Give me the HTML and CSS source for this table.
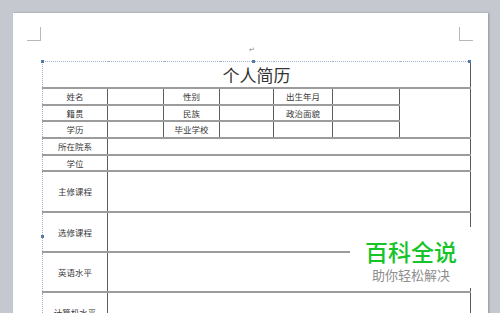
FILE: index.html
```html
<!DOCTYPE html>
<html lang="zh">
<head>
<meta charset="utf-8">
<title>个人简历</title>
<link rel="stylesheet" href="styles.css">
</head>
<body>
<div class="page">
  <div class="corners">
    <span class="corner corner-tl"></span>
    <span class="corner corner-tr"></span>
  </div>
  <div class="para"><span class="mark">↵</span></div>
  <div class="tablewrap">
    <span class="handle handle-tl"></span>
    <span class="handle handle-tc"></span>
    <span class="handle handle-tr"></span>
    <span class="handle handle-ml"></span>
    <table class="resume">
      <colgroup>
        <col class="c1"><col class="c2"><col class="c3"><col class="c4"><col class="c5"><col class="c6"><col class="c7">
      </colgroup>
      <tr class="r-title"><td class="title" colspan="7">个人简历</td></tr>
      <tr class="r-s1"><td class="first">姓名</td><td></td><td>性别</td><td></td><td>出生年月</td><td></td><td class="last" rowspan="3"></td></tr>
      <tr class="r-s2"><td class="first">籍贯</td><td></td><td>民族</td><td></td><td>政治面貌</td><td></td></tr>
      <tr class="r-s3"><td class="first">学历</td><td></td><td>毕业学校</td><td></td><td></td><td></td></tr>
      <tr class="r-s4"><td class="first">所在院系</td><td class="last" colspan="6"></td></tr>
      <tr class="r-s5"><td class="first">学位</td><td class="last" colspan="6"></td></tr>
      <tr class="r-big"><td class="first">主修课程</td><td class="last" colspan="6"></td></tr>
      <tr class="r-big2"><td class="first">选修课程</td><td class="last" colspan="6"></td></tr>
      <tr class="r-big2"><td class="first">英语水平</td><td class="last" colspan="6"></td></tr>
      <tr class="r-big2"><td class="first">计算机水平</td><td class="last" colspan="6"></td></tr>
    </table>
  </div>
  <div class="watermark">
    <div class="wm-main">百科全说</div>
    <div class="wm-sub">助你轻松解决</div>
  </div>
</div>
</body>
</html>
```
FILE: styles.css
```css
html, body {
  margin: 0;
  padding: 0;
}
body {
  background: #c5c9cf;
  width: 500px;
  height: 313px;
  overflow: hidden;
  font-family: "Noto Sans CJK SC", "Noto Sans", sans-serif;
}
.page {
  position: relative;
  margin: 13px 0 0 13px;
  width: 475px;
  height: 320px;
  background: #ffffff;
  box-shadow: 1px 0 2px rgba(80, 85, 95, 0.45);
  padding: 14px 15px 0 14px;
  box-sizing: border-box;
}
.corners {
  display: flex;
  justify-content: space-between;
  height: 14px;
}
.corner {
  width: 14px;
  height: 14px;
  box-sizing: border-box;
  border-bottom: 1px solid #b8b8b8;
}
.corner-tl { border-right: 1px solid #b8b8b8; }
.corner-tr { border-left: 1px solid #b8b8b8; }
.para {
  height: 20px;
  display: flex;
  justify-content: center;
  align-items: flex-start;
  padding-left: 4px;
}
.mark {
  font-size: 7px;
  line-height: 7px;
  margin-top: 5px;
  color: #8a8a8a;
}
.tablewrap {
  position: relative;
  margin-left: 15px;
  width: 428px;
}
.resume {
  border-collapse: collapse;
  table-layout: fixed;
  width: 428px;
}
.c1 { width: 65px; }
.c2 { width: 56px; }
.c3 { width: 56px; }
.c4 { width: 54px; }
.c5 { width: 59px; }
.c6 { width: 67px; }
.c7 { width: 71px; }
.resume td {
  padding: 0;
  border-left: 1px solid #5c5c5c;
  border-right: 1px solid #5c5c5c;
  border-bottom: 2px solid #9c9c9c;
  text-align: center;
  vertical-align: middle;
  font-size: 8.5px;
  line-height: 10px;
  color: #3a3a3a;
}
.resume td.first {
  border-left: 1px dotted #9fb2cc;
}
.resume td.last {
  border-right: 1px solid #5c5c5c;
}
.resume td.title {
  border-top: 1px dotted #9fb2cc;
  border-left: 1px dotted #9fb2cc;
  border-right: 1px solid #5c5c5c;
  font-size: 17px;
  line-height: 20px;
  color: #333;
  padding-top: 1px;
}
.r-title { height: 26px; }
.r-s1 { height: 17px; }
.r-s2 { height: 16px; }
.r-s3 { height: 17px; }
.r-s4 { height: 17px; }
.r-s5 { height: 16px; }
.r-big { height: 41px; }
.r-big2 { height: 40px; }
.handle {
  position: absolute;
  width: 3px;
  height: 3px;
  background: #5778a8;
  z-index: 2;
}
.handle-tl { left: -1px; top: -1px; }
.handle-tc { left: 210px; top: -1px; }
.handle-tr { left: 426px; top: -1px; }
.handle-ml { left: -1px; top: 174px; }
.watermark {
  position: absolute;
  left: 337px;
  top: 214px;
  width: 136px;
  height: 61px;
  background: #ffffff;
  display: flex;
  flex-direction: column;
  align-items: flex-start;
  padding-left: 15px;
  box-sizing: border-box;
  z-index: 3;
}
.wm-main {
  font-size: 23px;
  line-height: 27px;
  margin-top: 11px;
  color: #16c42a;
  font-weight: 500;
  letter-spacing: 0;
}
.wm-sub {
  font-size: 13px;
  line-height: 15px;
  margin-top: 2px;
  margin-left: 7px;
  color: #8d8d8d;
}
```
